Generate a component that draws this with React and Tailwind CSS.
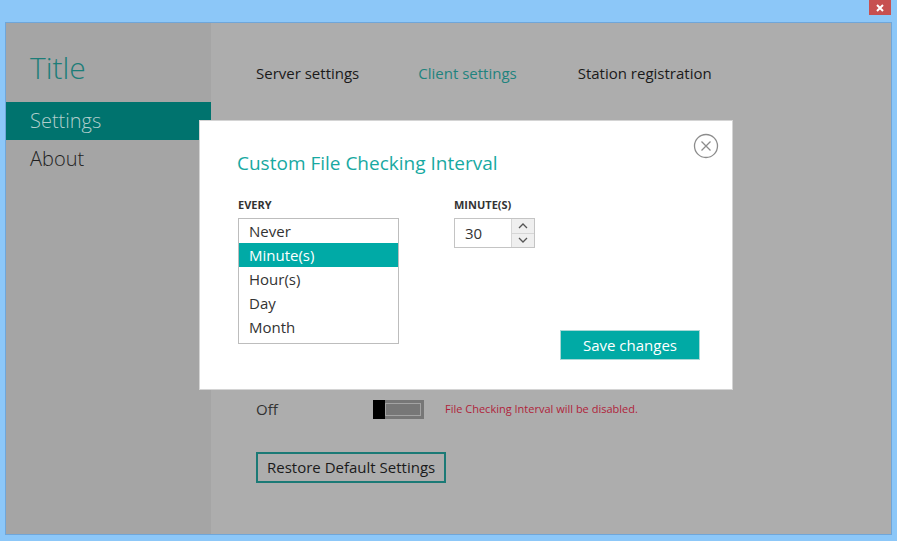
import React, { useState } from 'react';

const font = { fontFamily: '"Open Sans", "Noto Sans", sans-serif' };

const items = ['Never', 'Minute(s)', 'Hour(s)', 'Day', 'Month'];

const CloseCircle = () => (
  <svg width="26" height="26" viewBox="0 0 26 26">
    <circle cx="13" cy="13" r="11.5" fill="none" stroke="#8c8c8c" strokeWidth="1.3" />
    <path d="M8.5 8.5 L17.5 17.5 M17.5 8.5 L8.5 17.5" stroke="#8c8c8c" strokeWidth="1.3" />
  </svg>
);

const Chevron = ({ up }) => (
  <svg width="10" height="6" viewBox="0 0 10 6">
    <path d={up ? 'M1 5 L5 1 L9 5' : 'M1 1 L5 5 L9 1'} fill="none" stroke="#555" strokeWidth="1.3" />
  </svg>
);

const Dialog = () => {
  const [selected, setSelected] = useState(1);
  const [minutes, setMinutes] = useState(30);

  return (
    <div className="absolute left-[199px] top-[120px] w-[534px] h-[270px] bg-white border border-[#d4d4d4] pl-[37px] pr-[32px] pt-[29px]">
      <button className="absolute right-[13px] top-[12px]">
        <CloseCircle />
      </button>
      <h2 className="text-[19px] leading-[26px] text-[#17a9a2] font-normal">Custom File Checking Interval</h2>
      <div className="flex mt-[22px]">
        <div className="w-[217px]">
          <div className="text-[11px] leading-[14px] font-bold text-[#333] ml-[1px]">EVERY</div>
          <ul className="mt-[6px] w-[161px] h-[126px] border border-[#bdbdbd] ml-[1px]">
            {items.map((it, i) => (
              <li
                key={it}
                onClick={() => setSelected(i)}
                className={
                  i === selected
                    ? 'h-[24px] leading-[24px] pl-[10px] text-[15px] bg-[#00aaa6] text-white'
                    : 'h-[24px] leading-[24px] pl-[10px] text-[15px] text-[#333]'
                }
              >
                {it}
              </li>
            ))}
          </ul>
        </div>
        <div className="flex-1 flex flex-col">
          <div className="text-[11px] leading-[14px] font-bold text-[#333]">MINUTE(S)</div>
          <div className="mt-[6px] flex w-[81px] h-[30px] border border-[#c4c4c4]">
            <div className="flex-1 pl-[10px] text-[15px] leading-[28px] text-[#333]">{minutes}</div>
            <div className="w-[23px] flex flex-col border-l border-[#d6d6d6] bg-[#efefef]">
              <button onClick={() => setMinutes(minutes + 1)} className="flex-1 flex items-center justify-center border-b border-[#d6d6d6]">
                <Chevron up />
              </button>
              <button onClick={() => setMinutes(Math.max(0, minutes - 1))} className="flex-1 flex items-center justify-center">
                <Chevron />
              </button>
            </div>
          </div>
          <button className="self-end mt-[82px] w-[140px] h-[30px] bg-[#00aaa5] border border-[#a8d8d6] text-white text-[15px] leading-[26px]">
            Save changes
          </button>
        </div>
      </div>
    </div>
  );
};

const App = () => {
  return (
    <div className="relative w-[897px] h-[541px] bg-[#8cc7f8] pt-[22px] pl-[5px] pr-[5px] pb-[6px] overflow-hidden" style={font}>
      <div className="absolute right-[6px] top-0 w-[22px] h-[15px] bg-[#c75050] flex items-center justify-center">
        <svg width="8" height="8" viewBox="0 0 8 8">
          <path d="M1 1 L7 7 M7 1 L1 7" stroke="white" strokeWidth="2" />
        </svg>
      </div>
      <div className="flex h-full border border-[#6fa6d9]">
        <aside className="w-[205px] bg-[#a5a5a5] pt-[26px]">
          <div className="pl-[24px] text-[30px] leading-[38px] font-light text-[#1c7d78]">Title</div>
          <nav className="mt-[15px]">
            <div className="h-[38px] bg-[#00736e] pl-[24px] text-[20px] leading-[38px] font-light text-[#b2cecc]">Settings</div>
            <div className="h-[38px] pl-[24px] text-[20px] leading-[38px] font-light text-[#1f1f1f]">About</div>
          </nav>
        </aside>
        <main className="flex-1 bg-[#adadad] pl-[45px] pt-[40px]">
          <div className="flex text-[15px] leading-[20px]">
            <span className="text-[#1a1a1a]">Server settings</span>
            <span className="ml-[59px] text-[#1f837e]">Client settings</span>
            <span className="ml-[61px] text-[#1a1a1a]">Station registration</span>
          </div>
          <div className="mt-[317px] flex items-center h-[18px]">
            <span className="w-[117px] text-[15px] text-[#333]">Off</span>
            <div className="relative w-[51px] h-[19px] bg-[#777777] flex">
              <div className="w-[12px] h-full bg-black" />
              <div className="flex-1 my-[3px] mr-[3px] border border-[#a3a3a3]" />
            </div>
            <span className="ml-[21px] text-[11px] text-[#b01f3b]">File Checking Interval will be disabled.</span>
          </div>
          <button className="mt-[34px] h-[31px] px-[9px] border-2 border-[#1b7a76] text-[15px] text-[#1a1a1a] leading-[27px]">
            Restore Default Settings
          </button>
        </main>
      </div>
      <Dialog />
    </div>
  );
};

export default App;
